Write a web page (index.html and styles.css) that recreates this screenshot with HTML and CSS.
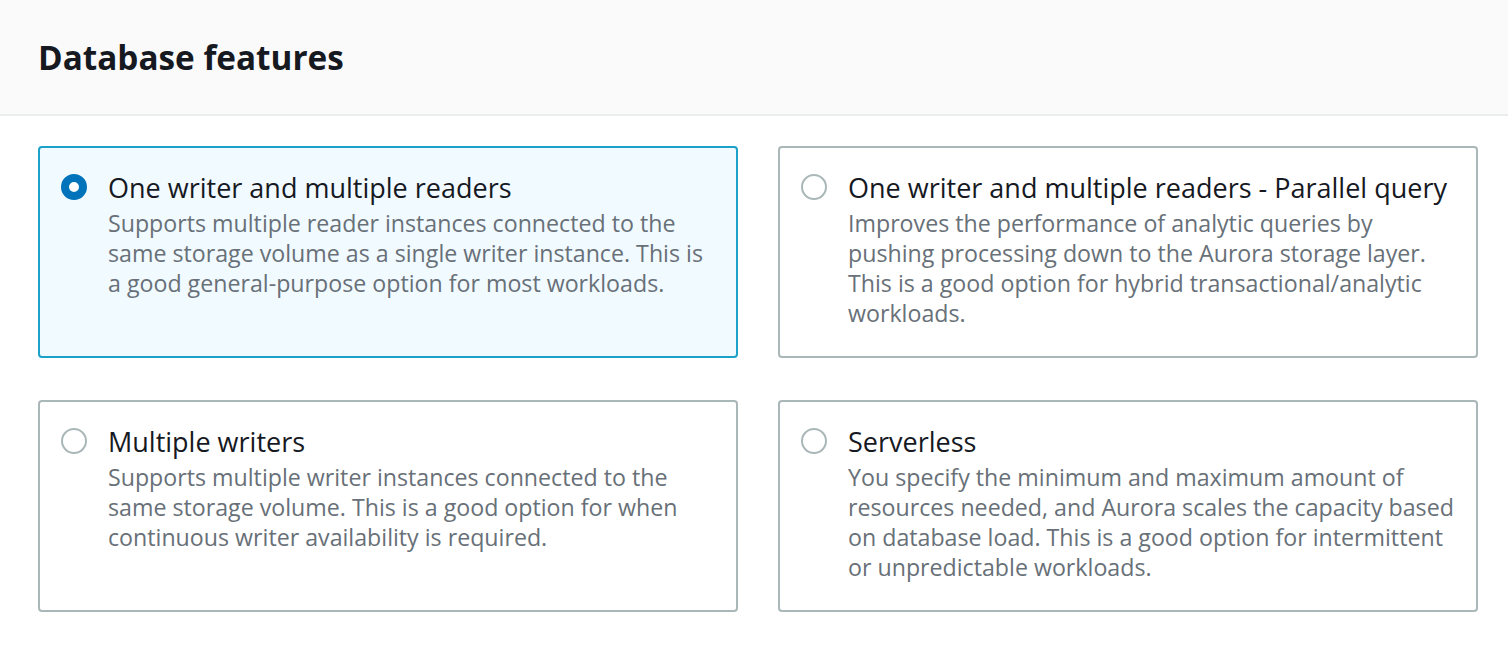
FILE: index.html
```html
<!DOCTYPE html>
<html>
<head>
<meta charset="utf-8">
<link rel="stylesheet" href="styles.css">
</head>
<body>
<div class="panel">
  <div class="header"><h2 class="title">Database features</h2></div>
  <div class="body">
    <div class="tiles">
      <label class="tile selected">
        <span class="radio"></span>
        <span class="content">
          <span class="label">One writer and multiple readers</span>
          <span class="desc">Supports multiple reader instances connected to the same storage volume as a single writer instance. This is a good general-purpose option for most workloads.</span>
        </span>
      </label>
      <label class="tile">
        <span class="radio"></span>
        <span class="content">
          <span class="label">One writer and multiple readers - Parallel query</span>
          <span class="desc">Improves the performance of analytic queries by pushing processing down to the Aurora storage layer. This is a good option for hybrid transactional/analytic workloads.</span>
        </span>
      </label>
      <label class="tile">
        <span class="radio"></span>
        <span class="content">
          <span class="label">Multiple writers</span>
          <span class="desc">Supports multiple writer instances connected to the same storage volume. This is a good option for when continuous writer availability is required.</span>
        </span>
      </label>
      <label class="tile">
        <span class="radio"></span>
        <span class="content">
          <span class="label">Serverless</span>
          <span class="desc">You specify the minimum and maximum amount of resources needed, and Aurora scales the capacity based on database load. This is a good option for intermittent or unpredictable workloads.</span>
        </span>
      </label>
    </div>
  </div>
</div>
</body>
</html>
```
FILE: styles.css
```css
html, body {
  margin: 0;
  padding: 0;
  background: #ffffff;
}
body {
  font-family: "Open Sans", "Noto Sans", sans-serif;
  color: #16191f;
}
.header {
  background: #fafafa;
  border-bottom: 2px solid #eaeded;
  height: 116px;
  box-sizing: border-box;
  padding: 0 38px;
  display: flex;
  align-items: center;
}
.title {
  margin: 0;
  font-size: 33.3px;
  font-weight: 700;
  line-height: 40px;
  color: #16191f;
  padding-bottom: 0;
}
.body {
  padding: 30px 31px 0 38px;
}
.tiles {
  display: grid;
  grid-template-columns: 700px 700px;
  column-gap: 40px;
  row-gap: 42px;
}
.tile {
  display: flex;
  align-items: flex-start;
  border: 2px solid #aab7b8;
  border-radius: 4px;
  min-height: 212px;
  box-sizing: border-box;
  padding: 20px 22px 28px 21px;
  background: #ffffff;
}
.tile.selected {
  border-color: #1ca2c8;
  background: #f1faff;
}
.radio {
  flex: none;
  width: 26px;
  height: 26px;
  box-sizing: border-box;
  border: 2px solid #aab7b8;
  border-radius: 50%;
  margin-top: 6px;
  margin-right: 21px;
  background: #ffffff;
}
.tile.selected .radio {
  border: 8px solid #0073bb;
  background: #ffffff;
}
.content {
  display: flex;
  flex-direction: column;
}
.label {
  font-size: 27px;
  line-height: 40px;
  color: #16191f;
  white-space: nowrap;
}
.desc {
  font-size: 23.2px;
  line-height: 30px;
  color: #687078;
}
```
